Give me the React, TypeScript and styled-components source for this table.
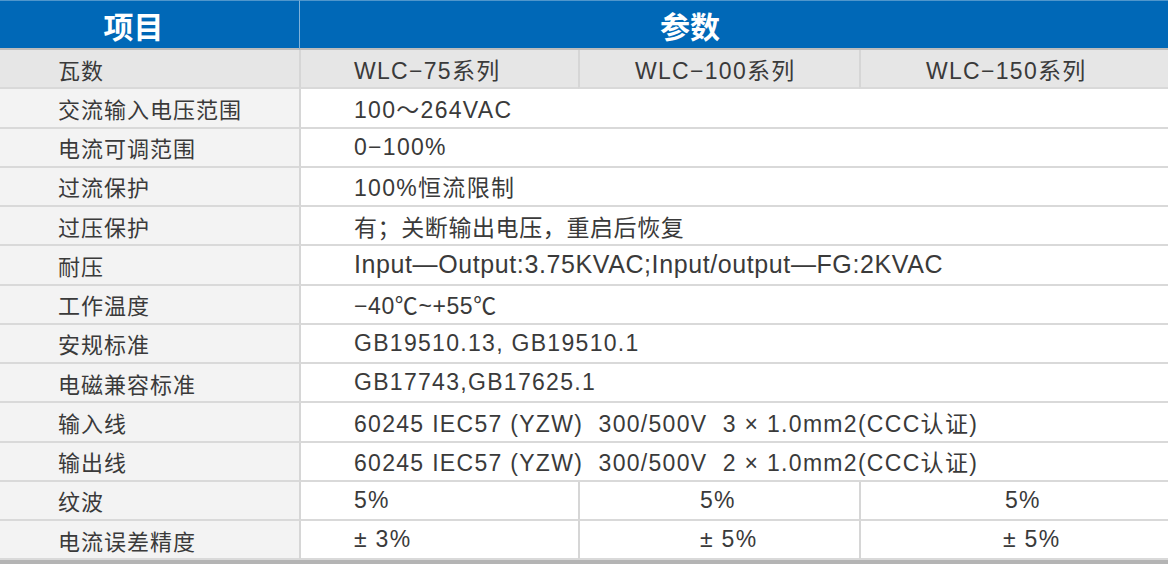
import React from "react";
import styled, { createGlobalStyle } from "styled-components";

const Global = createGlobalStyle`
  html, body { margin: 0; padding: 0; background: #ffffff; }
  body { font-family: "Liberation Sans", "Noto Sans CJK SC", sans-serif; }
`;

const Table = styled.div`
  width: 1168px;
  display: grid;
  grid-template-columns: 299px 279px 281px 309px;
  border-bottom: 4px solid #b4b4b4;
  box-sizing: border-box;
`;

const HeadCell = styled.div<{ $span?: number; $shift?: number }>`
  grid-column: span ${(p) => p.$span ?? 1};
  height: 50px;
  background: #0068b7;
  color: #ffffff;
  font-family: "Noto Sans CJK SC", sans-serif;
  font-weight: 700;
  font-size: 30px;
  display: flex;
  align-items: center;
  justify-content: center;
  padding-right: ${(p) => p.$shift ?? 0}px;
  box-sizing: border-box;
  border-top: 1px solid #4f96cc;
  border-bottom: 2px solid #bcbcbc;
  & + & { border-left: 1px solid #7fb2da; }
`;

const Cell = styled.div<{
  $span?: number;
  $label?: boolean;
  $shade?: boolean;
  $pad?: number;
}>`
  grid-column: span ${(p) => p.$span ?? 1};
  height: 39.25px;
  box-sizing: border-box;
  border-bottom: 2px solid #d9d9d9;
  border-left: ${(p) => (p.$label ? "none" : "2px solid #d6d6d6")};
  background: ${(p) => (p.$shade ? "#e6e6e6" : p.$label ? "#f3f3f3" : "#ffffff")};
  color: #3a3a3a;
  font-size: ${(p) => (p.$label ? "22px" : "23px")};
  letter-spacing: ${(p) => (p.$label ? "1px" : "1.3px")};
  display: flex;
  align-items: center;
  padding-left: ${(p) => p.$pad ?? 0}px;
  white-space: pre;
`;

const Tall = styled.span<{ $size?: number }>`
  font-size: ${(p) => p.$size ?? 25}px;
  letter-spacing: 0.6px;
`;

const Cjk = styled.span`
  letter-spacing: 0.6px;
`;

type Row = {
  label: string;
  value?: React.ReactNode;
  cells?: { text: string; pad?: number }[];
};

const rows: Row[] = [
  { label: "交流输入电压范围", value: "100～264VAC" },
  { label: "电流可调范围", value: "0−100%" },
  { label: "过流保护", value: "100%恒流限制" },
  { label: "过压保护", value: <Cjk>有；关断输出电压，重启后恢复</Cjk> },
  { label: "耐压", value: <Tall>Input—Output:3.75KVAC;Input/output—FG:2KVAC</Tall> },
  { label: "工作温度", value: <Tall $size={23}>−40℃~+55℃</Tall> },
  { label: "安规标准", value: "GB19510.13, GB19510.1" },
  { label: "电磁兼容标准", value: "GB17743,GB17625.1" },
  { label: "输入线", value: "60245 IEC57 (YZW)  300/500V  3 × 1.0mm2(CCC认证)" },
  { label: "输出线", value: "60245 IEC57 (YZW)  300/500V  2 × 1.0mm2(CCC认证)" },
  {
    label: "纹波",
    cells: [
      { text: "5%", pad: 53 },
      { text: "5%", pad: 120 },
      { text: "5%", pad: 144 },
    ],
  },
  {
    label: "电流误差精度",
    cells: [
      { text: "± 3%", pad: 53 },
      { text: "± 5%", pad: 120 },
      { text: "± 5%", pad: 142 },
    ],
  },
];

export default function App() {
  return (
    <>
      <Global />
      <Table>
        <HeadCell $shift={32}>项目</HeadCell>
        <HeadCell $span={3} $shift={88}>参数</HeadCell>

        <Cell $label $shade $pad={58}>瓦数</Cell>
        <Cell $shade $pad={53}>WLC−75系列</Cell>
        <Cell $shade $pad={55}>WLC−100系列</Cell>
        <Cell $shade $pad={65}>WLC−150系列</Cell>

        {rows.map((r) => (
          <React.Fragment key={r.label}>
            <Cell $label $pad={58}>{r.label}</Cell>
            {r.cells ? (
              r.cells.map((c, i) => (
                <Cell key={i} $pad={c.pad}>{c.text}</Cell>
              ))
            ) : (
              <Cell $span={3} $pad={53}>{r.value}</Cell>
            )}
          </React.Fragment>
        ))}
      </Table>
    </>
  );
}
